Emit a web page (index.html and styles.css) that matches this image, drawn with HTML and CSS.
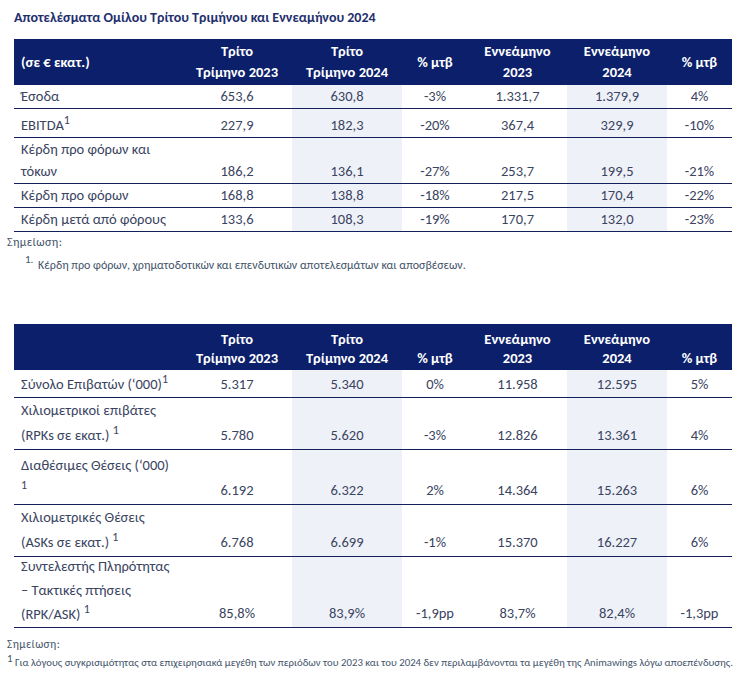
FILE: index.html
```html
<!DOCTYPE html>
<html lang="el">
<head>
<meta charset="utf-8">
<title>Αποτελέσματα Ομίλου</title>
<link rel="stylesheet" href="styles.css">
</head>
<body>
<div class="page">
  <h1 class="title">Αποτελέσματα Ομίλου Τρίτου Τριμήνου και Εννεαμήνου 2024</h1>

  <table class="tbl t1">
    <colgroup>
      <col class="c-lbl"><col class="c-n"><col class="c-n"><col class="c-p"><col class="c-n2"><col class="c-n3"><col class="c-p2">
    </colgroup>
    <thead>
      <tr>
        <th class="lbl">(σε € εκατ.)</th>
        <th>Τρίτο<br>Τρίμηνο 2023</th>
        <th>Τρίτο<br>Τρίμηνο 2024</th>
        <th>% μτβ</th>
        <th>Εννεάμηνο<br>2023</th>
        <th>Εννεάμηνο<br>2024</th>
        <th>% μτβ</th>
      </tr>
    </thead>
    <tbody>
      <tr class="r-a">
        <td class="lbl">Έσοδα</td><td>653,6</td><td class="sh">630,8</td><td>-3%</td><td>1.331,7</td><td class="sh">1.379,9</td><td>4%</td>
      </tr>
      <tr class="r-b">
        <td class="lbl">EBITDA<sup class="fn">1</sup></td><td>227,9</td><td class="sh">182,3</td><td>-20%</td><td>367,4</td><td class="sh">329,9</td><td>-10%</td>
      </tr>
      <tr class="r-c">
        <td class="lbl">Κέρδη προ φόρων και<br>τόκων</td><td>186,2</td><td class="sh">136,1</td><td>-27%</td><td>253,7</td><td class="sh">199,5</td><td>-21%</td>
      </tr>
      <tr class="r-d">
        <td class="lbl">Κέρδη προ φόρων</td><td>168,8</td><td class="sh">138,8</td><td>-18%</td><td>217,5</td><td class="sh">170,4</td><td>-22%</td>
      </tr>
      <tr class="r-e">
        <td class="lbl">Κέρδη μετά από φόρους</td><td>133,6</td><td class="sh">108,3</td><td>-19%</td><td>170,7</td><td class="sh">132,0</td><td>-23%</td>
      </tr>
    </tbody>
  </table>

  <div class="note note1">
    <p class="note-head">Σημείωση:</p>
    <p class="note-line"><sup class="nsup">1.</sup> Κέρδη προ φόρων, χρηματοδοτικών και επενδυτικών αποτελεσμάτων και αποσβέσεων.</p>
  </div>

  <table class="tbl t2">
    <colgroup>
      <col class="c-lbl"><col class="c-n"><col class="c-n"><col class="c-p"><col class="c-n2"><col class="c-n3"><col class="c-p2">
    </colgroup>
    <thead>
      <tr>
        <th class="lbl"></th>
        <th>Τρίτο<br>Τρίμηνο 2023</th>
        <th>Τρίτο<br>Τρίμηνο 2024</th>
        <th>% μτβ</th>
        <th>Εννεάμηνο<br>2023</th>
        <th>Εννεάμηνο<br>2024</th>
        <th>% μτβ</th>
      </tr>
    </thead>
    <tbody>
      <tr class="s-a">
        <td class="lbl">Σύνολο Επιβατών (‘000)<sup class="fn">1</sup></td><td>5.317</td><td class="sh">5.340</td><td>0%</td><td>11.958</td><td class="sh">12.595</td><td>5%</td>
      </tr>
      <tr class="s-b">
        <td class="lbl">Χιλιομετρικοί επιβάτες<br>(RPKs σε εκατ.) <sup class="fn">1</sup></td><td>5.780</td><td class="sh">5.620</td><td>-3%</td><td>12.826</td><td class="sh">13.361</td><td>4%</td>
      </tr>
      <tr class="s-c">
        <td class="lbl">Διαθέσιμες Θέσεις (‘000)<br><sup class="fn">1</sup></td><td>6.192</td><td class="sh">6.322</td><td>2%</td><td>14.364</td><td class="sh">15.263</td><td>6%</td>
      </tr>
      <tr class="s-d">
        <td class="lbl">Χιλιομετρικές Θέσεις<br>(ASKs σε εκατ.) <sup class="fn">1</sup></td><td>6.768</td><td class="sh">6.699</td><td>-1%</td><td>15.370</td><td class="sh">16.227</td><td>6%</td>
      </tr>
      <tr class="s-e">
        <td class="lbl"><span class="stack">Συντελεστής Πληρότητας<br>– Τακτικές πτήσεις<br>(RPK/ASK) <sup class="fn">1</sup></span></td><td>85,8%</td><td class="sh">83,9%</td><td>-1,9pp</td><td>83,7%</td><td class="sh">82,4%</td><td>-1,3pp</td>
      </tr>
    </tbody>
  </table>

  <div class="note note2">
    <p class="note-head">Σημείωση:</p>
    <p class="note-line"><sup class="nsup">1</sup> Για λόγους συγκρισιμότητας στα επιχειρησιακά μεγέθη των περιόδων του 2023 και του 2024 δεν περιλαμβάνονται τα μεγέθη της Animawings λόγω αποεπένδυσης.</p>
  </div>
</div>
</body>
</html>
```

FILE: styles.css
```css
* { box-sizing: border-box; }

body {
  margin: 0;
  background: #ffffff;
  font-family: Carlito, Calibri, "Open Sans", "Noto Sans", sans-serif;
  color: #3a4461;
}

.page {
  padding: 10px 10px 0 14px;
}

.title {
  margin: 0 0 13px 0;
  font-size: 14px;
  line-height: 16px;
  font-weight: bold;
  color: #1f2f6e;
}

.tbl {
  border-collapse: collapse;
  table-layout: fixed;
  width: 718px;
  font-size: 14.5px;
}

.c-lbl { width: 168px; }
.c-n { width: 110px; }
.c-p { width: 66px; }
.c-n2 { width: 99px; }
.c-n3 { width: 100px; }
.c-p2 { width: 65px; }

.tbl th {
  background: #0c1f6b;
  color: #ffffff;
  font-weight: bold;
  text-align: center;
  padding: 0 4px;
  white-space: nowrap;
}

.tbl th.lbl {
  text-align: left;
  padding-left: 7px;
}

.t1 th {
  height: 46px;
  line-height: 21px;
  vertical-align: middle;
}

.t2 th {
  height: 46px;
  line-height: 19px;
  vertical-align: bottom;
  padding-bottom: 2px;
}

.tbl td {
  border-bottom: 1.5px solid #14205a;
  text-align: center;
  vertical-align: bottom;
  padding: 0 4px 1px;
  white-space: nowrap;
}

.tbl td.lbl {
  text-align: left;
  padding-left: 7px;
}

.tbl td.sh {
  background: #eef1f8;
}

.t1 td { line-height: 22px; }
.t2 td { line-height: 25px; }

.r-a td { height: 22px; }
.r-b td { height: 28.5px; }
.r-c td { height: 44.5px; }
.r-d td { height: 23px; }
.r-e td { height: 23.5px; }

.s-a td { height: 28px; padding-bottom: 0; }
.s-b td { height: 50px; }
.s-c td { height: 55px; }
.s-d td { height: 51px; }
.s-e td { height: 70px; }

.stack {
  display: block;
  line-height: 24px;
  margin-top: -3px;
}

.fn {
  font-size: 12px;
  line-height: 0;
  vertical-align: 6px;
}

.note {
  color: #44546a;
  margin-left: -7px;
}

.note p {
  margin: 0;
}

.note-head {
  letter-spacing: 0.4px;
}

.note1 {
  font-size: 12px;
  padding-top: 3px;
  margin-bottom: 51px;
}

.note1 .note-head {
  line-height: 15px;
}

.note1 .note-line {
  padding-left: 18px;
  margin-top: 8px;
  line-height: 15px;
}

.note1 .nsup {
  font-size: 11px;
  line-height: 0;
  vertical-align: 6px;
  margin-right: 2px;
}

.note2 {
  font-size: 10.75px;
  padding-top: 9px;
}

.note2 .note-head {
  font-size: 11.5px;
  line-height: 14px;
}

.note2 .note-line {
  margin-top: 5px;
  line-height: 13px;
  white-space: nowrap;
}

.note2 .nsup {
  font-size: 11px;
  line-height: 0;
  vertical-align: 4px;
}
```
